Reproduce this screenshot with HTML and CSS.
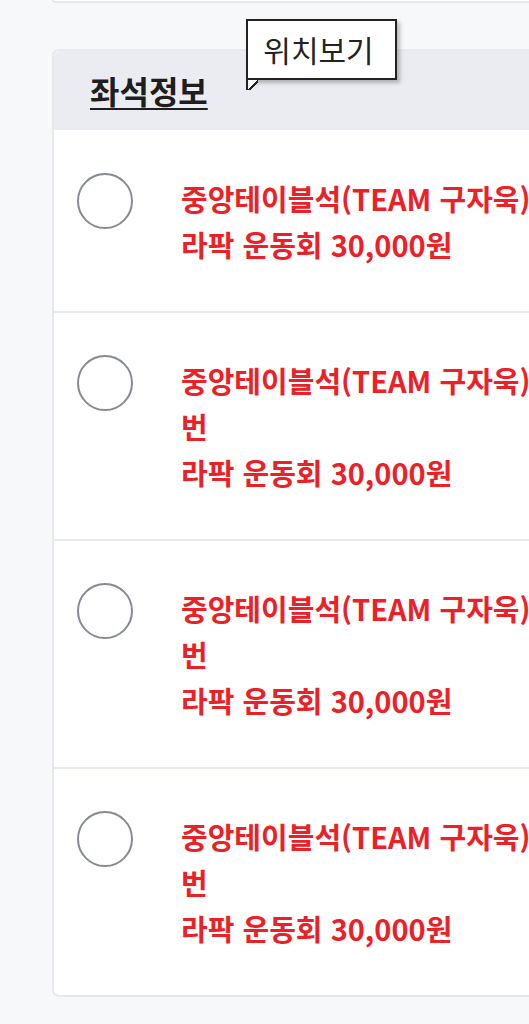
FILE: index.html
```html
<!DOCTYPE html>
<html lang="ko">
<head>
<meta charset="utf-8">
<link rel="stylesheet" href="styles.css">
</head>
<body>
<div class="page">
  <div class="prev-card"></div>
  <section class="seat-card">
    <div class="tooltip">위치보기</div>
    <header class="seat-head"><h2 class="seat-title">좌석정보</h2></header>
    <ul class="seat-list">
      <li class="seat-row">
        <span class="radio"></span>
        <div class="seat-info">
          <span class="line">중앙테이블석(TEAM 구자욱)</span>
          <span class="line">라팍 운동회 30,000원</span>
        </div>
      </li>
      <li class="seat-row">
        <span class="radio"></span>
        <div class="seat-info">
          <span class="line">중앙테이블석(TEAM 구자욱)</span>
          <span class="line">번</span>
          <span class="line">라팍 운동회 30,000원</span>
        </div>
      </li>
      <li class="seat-row">
        <span class="radio"></span>
        <div class="seat-info">
          <span class="line">중앙테이블석(TEAM 구자욱)</span>
          <span class="line">번</span>
          <span class="line">라팍 운동회 30,000원</span>
        </div>
      </li>
      <li class="seat-row">
        <span class="radio"></span>
        <div class="seat-info">
          <span class="line">중앙테이블석(TEAM 구자욱)</span>
          <span class="line">번</span>
          <span class="line">라팍 운동회 30,000원</span>
        </div>
      </li>
    </ul>
  </section>
</div>
</body>
</html>
```
FILE: styles.css
```css
html, body {
  margin: 0;
  padding: 0;
  overflow: hidden;
  background: #f7f8fa;
  font-family: "Noto Sans CJK KR", "Noto Sans", sans-serif;
}
.page {
  padding-left: 52px;
  width: 560px;
}
.prev-card {
  height: 1px;
  background: #fff;
  border: 2px solid #e7e8ed;
  border-top: none;
  border-bottom-left-radius: 6px;
  margin-bottom: 46px;
}
.seat-card {
  position: relative;
  background: #fff;
  border: 2px solid #e7e8ed;
  border-radius: 7px;
}
.seat-head {
  background: #ebecf1;
  height: 79px;
  display: flex;
  align-items: center;
  padding-left: 36px;
  border-radius: 6px 6px 0 0;
}
.seat-title {
  margin: 0 0 2px;
  font-size: 32px;
  font-weight: 700;
  color: #1e1e1e;
  text-decoration: underline;
  text-decoration-thickness: 2px;
  text-underline-offset: 4px;
  letter-spacing: 0;
}
.tooltip {
  position: absolute;
  left: 192px;
  top: -32px;
  width: 147px;
  height: 57px;
  border: 2px solid #222;
  background: #fff;
  box-shadow: 3px 3px 4px rgba(0,0,0,0.25);
  font-size: 30px;
  line-height: 57px;
  padding-right: 6px;
  box-sizing: content-box;
  width: 141px;
  text-align: center;
  color: #222;
  z-index: 2;
}
.tooltip::after {
  content: "";
  position: absolute;
  left: -2px;
  bottom: -12px;
  width: 10px;
  height: 10px;
  background: linear-gradient(to bottom right, #fff 0 48%, #222 48% 62%, transparent 62%);
  border-left: 2px solid #222;
}
.seat-list {
  list-style: none;
  margin: 0;
  padding: 0;
}
.seat-row {
  display: flex;
  align-items: flex-start;
  padding: 44px 0 44px 23px;
  border-top: 2px solid #e8e9ee;
}
.seat-row:first-child {
  border-top: none;
  padding-top: 45px;
}
.radio {
  flex: none;
  width: 52px;
  height: 52px;
  border: 2px solid #868a93;
  border-radius: 50%;
  margin-top: -2px;
  margin-right: 48px;
}
.seat-info {
  display: flex;
  flex-direction: column;
  color: #ec2128;
  font-size: 29px;
  font-weight: 700;
  line-height: 46px;
  letter-spacing: 0;
  white-space: nowrap;
}
```
